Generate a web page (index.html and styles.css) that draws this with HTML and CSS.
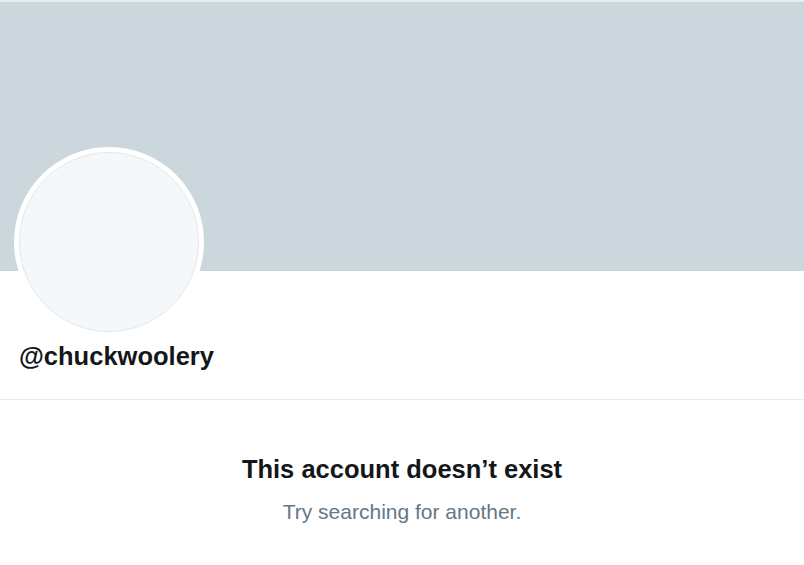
FILE: index.html
```html
<!DOCTYPE html>
<html>
<head>
<meta charset="utf-8">
<link rel="stylesheet" href="styles.css">
</head>
<body>
<div class="page">
  <div class="topline"></div>
  <div class="banner"></div>
  <div class="profile">
    <div class="avatar"><div class="avatar-inner"></div></div>
    <div class="handle">@chuckwoolery</div>
  </div>
  <div class="empty">
    <div class="title">This account doesn’t exist</div>
    <div class="sub">Try searching for another.</div>
  </div>
</div>
</body>
</html>
```
FILE: styles.css
```css
html, body {
  margin: 0;
  padding: 0;
  background: #ffffff;
}
.page {
  font-family: "Liberation Sans", Arial, sans-serif;
  width: 804px;
  height: 565px;
  overflow: hidden;
}
.topline {
  height: 2px;
  background: #e6ecf0;
}
.banner {
  height: 269px;
  background: #ccd6dd;
}
.profile {
  display: flex;
  flex-direction: column;
  align-items: flex-start;
  padding: 0 0 0 14px;
  border-bottom: 1px solid #e6ecf0;
  height: 128px;
}
.avatar {
  width: 190px;
  height: 190px;
  margin-top: -124px;
  border-radius: 50%;
  background: #ffffff;
  padding: 5px;
  box-sizing: border-box;
  position: relative;
  flex: none;
}
.avatar-inner {
  width: 100%;
  height: 100%;
  border-radius: 50%;
  background: #f5f8fa;
  border: 1px solid #e1e8ed;
  box-sizing: border-box;
}
.handle {
  margin: 4px 0 0 5px;
  font-weight: 700;
  font-size: 25.5px;
  line-height: 30px;
  color: #14171a;
}
.empty {
  text-align: center;
  padding-top: 54px;
}
.title {
  font-weight: 700;
  font-size: 25.5px;
  line-height: 30px;
  color: #14171a;
}
.sub {
  margin-top: 15px;
  font-size: 21px;
  line-height: 26px;
  color: #657786;
}
```
